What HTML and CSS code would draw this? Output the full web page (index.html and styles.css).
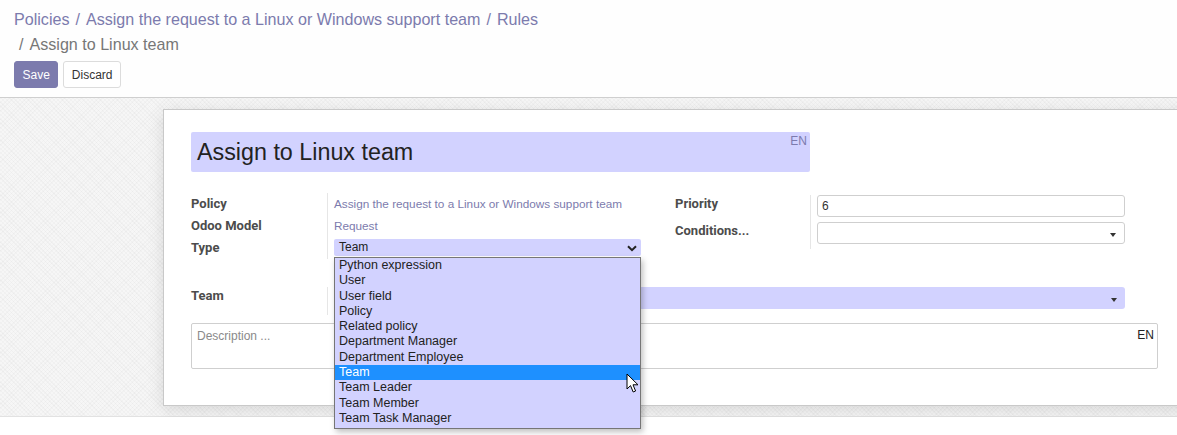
FILE: index.html
```html
<!DOCTYPE html>
<html>
<head>
<meta charset="utf-8">
<link rel="stylesheet" href="styles.css">
</head>
<body>
<div class="control-panel">
  <ol class="breadcrumb">
    <li><a>Policies</a></li>
    <li><a>Assign the request to a Linux or Windows support team</a></li>
    <li><a>Rules</a></li>
    <li class="active">Assign to Linux team</li>
  </ol>
  <div class="buttons">
    <button class="btn btn-primary">Save</button>
    <button class="btn btn-secondary">Discard</button>
  </div>
</div>
<div class="content">
  <div class="sheet">
    <div class="title-field">
      <span class="title-text">Assign to Linux team</span>
      <span class="lang">EN</span>
    </div>
    <div class="groups">
      <div class="group group-left">
        <div class="lbl">Policy</div>
        <div class="val"><a class="link">Assign the request to a Linux or Windows support team</a></div>
        <div class="lbl">Odoo Model</div>
        <div class="val"><a class="link">Request</a></div>
        <div class="lbl">Type</div>
        <div class="val">
          <div class="select-wrap">
            <div class="select">
              <span>Team</span>
              <svg class="chev" width="10" height="7" viewBox="0 0 10 7"><path d="M1 1.2 L5 5.2 L9 1.2" fill="none" stroke="#222" stroke-width="2"/></svg>
            </div>
            <ul class="dropdown">
              <li>Python expression</li>
              <li>User</li>
              <li>User field</li>
              <li>Policy</li>
              <li>Related policy</li>
              <li>Department Manager</li>
              <li>Department Employee</li>
              <li class="sel">Team</li>
              <li>Team Leader</li>
              <li>Team Member</li>
              <li>Team Task Manager</li>
            </ul>
            <svg class="cursor" width="14" height="21" viewBox="0 0 14 21"><path d="M1 1 L1 16 L4.5 12.6 L7.2 19 L9.6 18 L7 11.8 L12 11.8 Z" fill="#fff" stroke="#000" stroke-width="1" stroke-linejoin="round"/></svg>
          </div>
        </div>
      </div>
      <div class="group group-right">
        <div class="lbl">Priority</div>
        <div class="val"><div class="input">6</div></div>
        <div class="lbl">Conditions...</div>
        <div class="val"><div class="input many2one"><span class="caret"></span></div></div>
      </div>
    </div>
    <div class="team-row">
      <div class="lbl">Team</div>
      <div class="val"><div class="m2o-req"><span class="caret"></span></div></div>
    </div>
    <div class="description">
      <span class="placeholder">Description ...</span>
      <span class="lang dark">EN</span>
    </div>
  </div>
</div>
<div class="bottom"></div>
</body>
</html>
```

FILE: styles.css
```css
* { box-sizing: border-box; }
html, body { margin: 0; padding: 0; overflow: hidden; }
body {
  width: 1177px;
  height: 435px;
  font-family: Roboto, "Liberation Sans", Arial, sans-serif;
  font-size: 13px;
  color: #4c4c4c;
  background: #fff;
}
.control-panel {
  height: 98px;
  background: #fefefe;
  border-bottom: 1px solid #cfcfcf;
  padding: 7px 14px 0 14px;
}
.breadcrumb {
  list-style: none;
  margin: 0;
  padding: 0;
  display: flex;
  flex-wrap: wrap;
  width: 535px;
  font-family: "Liberation Sans", Arial, sans-serif;
  font-size: 16.1px;
  line-height: 25px;
}
.breadcrumb li { color: #7c7bad; }
.breadcrumb li + li::before {
  content: "/";
  padding: 0 6px 0 6px;
  color: #7c7bad;
}
.breadcrumb li.active { color: #777; }
.breadcrumb li.active::before { color: #777; padding-left: 5px; }
.breadcrumb a { color: #7c7bad; }
.buttons {
  display: flex;
  gap: 5px;
  margin-top: 4px;
}
.btn {
  height: 27px;
  font-family: "Liberation Sans", Arial, sans-serif;
  font-size: 12px;
  border-radius: 3px;
  padding: 0 7.5px;
  cursor: pointer;
}
.btn-primary {
  background: #7c7bad;
  color: #fff;
  border: 1px solid #7c7bad;
}
.btn-secondary {
  background: #fff;
  color: #333;
  border: 1px solid #dcdcdc;
}
.content {
  height: 319px;
  background-color: #f6f6f6;
  background-image: repeating-linear-gradient(45deg, rgba(0,0,0,0.025) 0 1px, transparent 1px 3px),
                    repeating-linear-gradient(-45deg, rgba(0,0,0,0.02) 0 1px, transparent 1px 3px);
  padding-top: 11px;
  padding-left: 163px;
  border-bottom: 1px solid #e2e2e2;
}
.bottom { height: 30px; background: #fff; }
.sheet {
  width: 1040px;
  height: 297px;
  background: #fff;
  border: 1px solid #c9c9c9;
  box-shadow: 0 4px 16px rgba(0,0,0,0.12);
  padding: 22px 0 0 27px;
}
.title-field {
  width: 619px;
  height: 40px;
  background: #d2d2ff;
  border-radius: 2px;
  display: flex;
  justify-content: space-between;
  padding: 0 3px 0 6px;
}
.title-text {
  font-family: "Liberation Sans", Arial, sans-serif;
  font-size: 23.3px;
  color: #222;
  line-height: 40px;
}
.lang {
  font-family: "Liberation Sans", Arial, sans-serif;
  font-size: 12px;
  color: #7c7bad;
  line-height: 18px;
}
.lang.dark { color: #222; }
.groups {
  display: flex;
  align-items: flex-start;
  margin-top: 23px;
}
.group {
  display: grid;
  grid-auto-rows: 22px;
}
.group-left { width: 484px; grid-template-columns: 136px 1fr; margin-top: -2px; }
.group-right { width: 484px; grid-template-columns: 135px 1fr; grid-template-rows: 27px 27px; }
.lbl {
  font-weight: bold;
  font-size: 13px;
  color: #4c4c4c;
  line-height: 22px;
}
.val {
  border-left: 1px solid #e6e6e6;
  padding-left: 6px;
  font-family: "Liberation Sans", Arial, sans-serif;
  font-size: 11.75px;
  line-height: 22px;
}
.link { color: #7c7bad; }
.select-wrap {
  position: relative;
  width: 307px;
  margin-top: 2px;
}
.select {
  height: 17px;
  background: #d2d2ff;
  border-radius: 2px;
  display: flex;
  justify-content: space-between;
  align-items: center;
  padding: 0 4px 0 5px;
  color: #222;
  line-height: 17px;
  font-size: 12px;
}
.chev { margin-top: 1px; }
.dropdown {
  position: absolute;
  left: 0;
  top: 18px;
  width: 307px;
  margin: 0;
  padding: 0 0 2px 0;
  list-style: none;
  background: #d2d2ff;
  border: 1px solid #767676;
  box-shadow: 2px 3px 6px rgba(0,0,0,0.25);
  z-index: 5;
  font-family: "Liberation Sans", Arial, sans-serif;
  font-size: 12.5px;
  color: #222;
}
.dropdown li {
  height: 15.3px;
  line-height: 15.3px;
  padding-left: 4px;
}
.dropdown li.sel {
  background: #1e90ff;
  color: #fff;
}
.cursor {
  position: absolute;
  left: 292px;
  top: 134px;
  z-index: 6;
}
.group-right .lbl { line-height: 18px; }
.group-right .val { padding-left: 6px; line-height: 20px; }
.input {
  width: 308px;
  height: 22px;
  border: 1px solid #cfcfcf;
  border-radius: 3px;
  padding-left: 4px;
  font-size: 12px;
  color: #333;
  line-height: 20px;
  position: relative;
}
.many2one { display: flex; justify-content: flex-end; align-items: center; padding-right: 8px; }
.caret {
  width: 0;
  height: 0;
  border-left: 3.5px solid transparent;
  border-right: 3.5px solid transparent;
  border-top: 4px solid #333;
  margin-top: 3px;
}
.team-row {
  display: grid;
  grid-template-columns: 136px 1fr;
  margin-top: 28px;
  height: 28px;
}
.team-row .lbl { line-height: 18px; }
.team-row .val { padding-left: 6px; }
.m2o-req {
  width: 791px;
  height: 22px;
  background: #d2d2ff;
  border-radius: 3px;
  display: flex;
  justify-content: flex-end;
  align-items: center;
  padding-right: 8px;
}
.description {
  width: 967px;
  height: 46px;
  margin-top: 8px;
  border: 1px solid #cfcfcf;
  border-radius: 2px;
  display: flex;
  justify-content: space-between;
  padding: 4px 3px 0 5px;
}
.placeholder {
  font-size: 12px;
  color: #8a8a8a;
  line-height: 16px;
  font-family: "Liberation Sans", Arial, sans-serif;
}
.description .lang { line-height: 14px; }
```
